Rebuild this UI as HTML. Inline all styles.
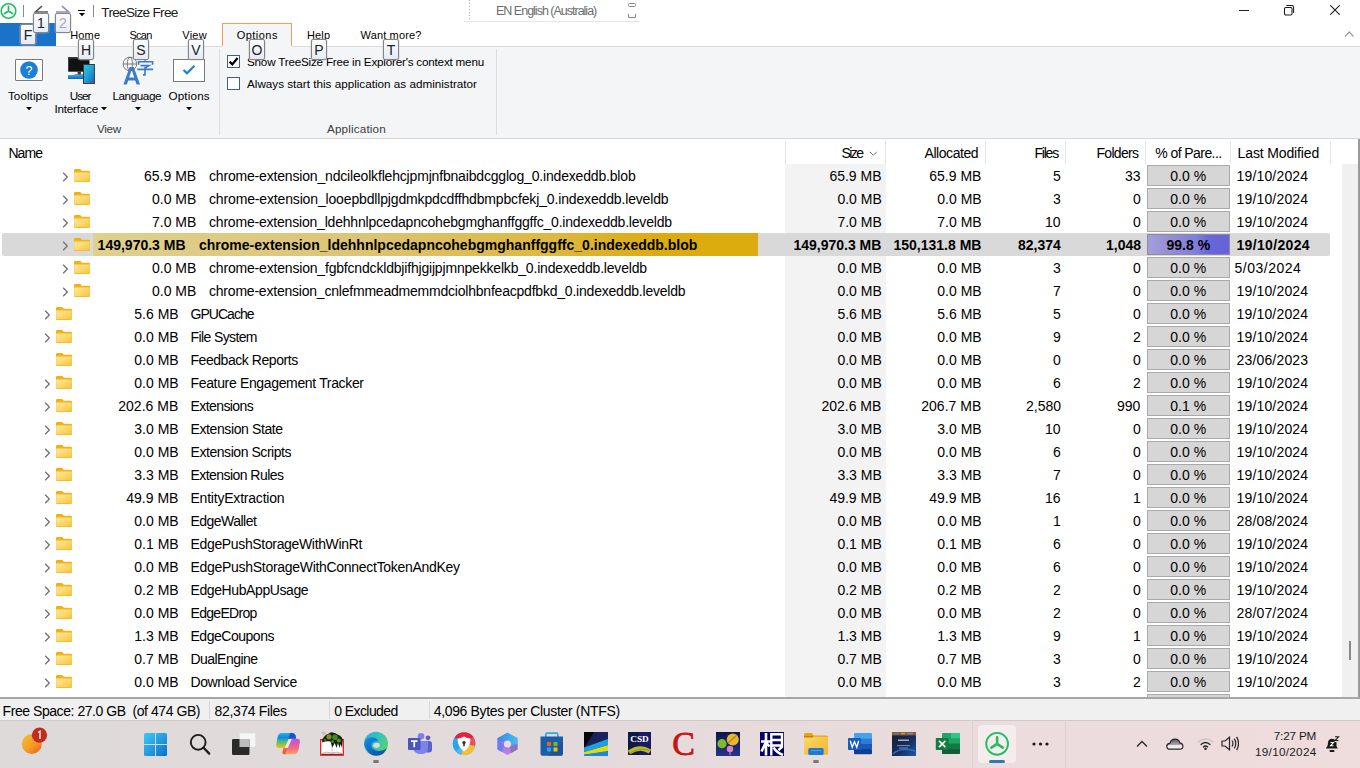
<!DOCTYPE html>
<html><head><meta charset="utf-8"><title>TreeSize Free</title>
<style>
html,body{margin:0;padding:0;}
body{width:1360px;height:768px;overflow:hidden;position:relative;background:#fff;font-family:"Liberation Sans", sans-serif;}
.t{position:absolute;white-space:nowrap;}
.r{position:absolute;display:block;}
.kt{position:absolute;box-sizing:border-box;border:1px solid #858585;border-radius:2px;background:linear-gradient(180deg,#fbfcfe 0%,#eef2f9 60%,#e4eaf5 100%);font-size:14px;text-align:center;font-family:"Liberation Sans", sans-serif;box-shadow:0 0 0 0.3px #bbb;}
</style></head><body>
<svg width="0" height="0" style="position:absolute"><defs><linearGradient id="fg" x1="0" y1="0" x2="1" y2="1"><stop offset="0" stop-color="#ffe7a0"/><stop offset="0.5" stop-color="#fcd86e"/><stop offset="1" stop-color="#f7c440"/></linearGradient></defs></svg>
<div class="r" style="left:0px;top:0px;width:1360px;height:46px;background:#fff"></div>
<svg class="r" style="left:0px;top:2px;" width="18" height="18" viewBox="0 0 18 18"><circle cx="8.5" cy="9" r="7.3" fill="none" stroke="#1fbf5f" stroke-width="1.6"/><path d="M8.5 9 V4.5 M8.5 9 L4.6 11.6 M8.5 9 L12.4 11.6" stroke="#1fbf5f" stroke-width="1.8" stroke-linecap="round"/></svg>
<div class="r" style="left:23px;top:5px;width:1px;height:12px;background:#8a8a8a"></div>
<svg class="r" style="left:33px;top:5px;" width="18" height="10" viewBox="0 0 18 10"><path d="M9 1 L2.5 7 H15" fill="none" stroke="#555" stroke-width="1.7"/></svg>
<svg class="r" style="left:55px;top:5px;" width="18" height="10" viewBox="0 0 18 10"><path d="M7 1 L13.5 7 H1" fill="none" stroke="#8a8ab8" stroke-width="1.7"/></svg>
<div class="r" style="left:78px;top:10px;width:7px;height:1px;background:#000"></div>
<svg class="r" style="left:78.8px;top:13px;" width="8" height="5" viewBox="0 0 8 5"><path d="M0 0 H6 L3 3.3 Z" fill="#000"/></svg>
<div class="r" style="left:93px;top:5px;width:1px;height:12px;background:#8a8a8a"></div>
<div class="t" style="left:101.30px;top:3px;font-size:13.6px;line-height:20px;color:#1c1c1c;letter-spacing:-0.717px;">TreeSize Free</div>
<svg class="r" style="left:464px;top:0px;" width="180" height="23" viewBox="0 0 180 23"><line x1="5.5" y1="0" x2="5.5" y2="21" stroke="#aaa" stroke-dasharray="1,2"/><line x1="0" y1="21.5" x2="176" y2="21.5" stroke="#e6e6e6"/></svg>
<div class="t" style="left:496.00px;top:1px;font-size:12.5px;line-height:20px;color:#6d6d6d;letter-spacing:-1.000px;">EN English (Australia)</div>
<svg class="r" style="left:627px;top:2px;" width="10" height="18" viewBox="0 0 10 18"><rect x="1.5" y="1.5" width="7" height="3" rx="1" fill="none" stroke="#888"/><path d="M1.5 12 V15.5 H8.5 V12" fill="none" stroke="#888"/></svg>
<div class="r" style="left:1239px;top:10px;width:10px;height:1px;background:#222"></div>
<svg class="r" style="left:1283px;top:4px;" width="12" height="12" viewBox="0 0 12 12"><rect x="1.5" y="3.5" width="7.5" height="7.5" rx="1.3" fill="none" stroke="#1a1a1a" stroke-width="1.05"/><path d="M3.3 1.5 H8.8 Q10.6 1.5 10.6 3.3 V9" fill="none" stroke="#1a1a1a" stroke-width="1.05"/></svg>
<svg class="r" style="left:1330px;top:5px;" width="10" height="10" viewBox="0 0 10 10"><path d="M0.3 0.3 L9.7 9.7 M9.7 0.3 L0.3 9.7" stroke="#1a1a1a" stroke-width="1.05"/></svg>
<div class="r" style="left:0px;top:23px;width:56px;height:23px;background:#1a73c8"></div>
<div class="t" style="left:70.30px;top:25px;font-size:11px;line-height:20px;color:#000;letter-spacing:0.133px;">Home</div>
<div class="t" style="left:129.50px;top:25px;font-size:11px;line-height:20px;color:#000;letter-spacing:-0.733px;">Scan</div>
<div class="t" style="left:182.30px;top:25px;font-size:11px;line-height:20px;color:#000;letter-spacing:0.233px;">View</div>
<div class="r" style="left:222px;top:23px;width:70px;height:24px;background:#f4f5f7;border:1px solid #f59a62;border-bottom:none;box-sizing:border-box"></div>
<div class="t" style="left:236.70px;top:25px;font-size:11px;line-height:20px;color:#000;letter-spacing:0.467px;">Options</div>
<div class="t" style="left:307.00px;top:25px;font-size:11px;line-height:20px;color:#000;letter-spacing:0.133px;">Help</div>
<div class="t" style="left:360.50px;top:25px;font-size:11px;line-height:20px;color:#000;letter-spacing:0.156px;">Want more?</div>
<svg class="r" style="left:1344px;top:30px;" width="11" height="8" viewBox="0 0 11 8"><path d="M1 6.5 L5.2 2 L9.4 6.5" fill="none" stroke="#9a9a9a" stroke-width="1.2"/></svg>
<div class="r" style="left:0px;top:46px;width:222px;height:1px;background:#dcdcdc"></div>
<div class="r" style="left:292px;top:46px;width:1068px;height:1px;background:#dcdcdc"></div>
<div class="r" style="left:0px;top:47px;width:1360px;height:91px;background:#f4f5f7"></div>
<div class="r" style="left:222px;top:46px;width:70px;height:1px;background:#f4f5f7"></div>
<div class="r" style="left:0px;top:138px;width:1360px;height:1px;background:#d6d6d6"></div>
<div class="r" style="left:15px;top:59px;width:28px;height:22px;background:#fff;border:1px solid #7a7a7a;box-sizing:border-box;border-radius:1px"></div>
<svg class="r" style="left:19px;top:61px;" width="20" height="18" viewBox="0 0 20 18"><circle cx="10" cy="9" r="8.8" fill="#1a7fd6"/><text x="10" y="13.6" font-family="Liberation Sans" font-size="12.5" fill="#fff" text-anchor="middle">?</text></svg>
<div class="t" style="left:7.90px;top:86px;font-size:11.7px;line-height:20px;color:#000;letter-spacing:0.071px;">Tooltips</div>
<svg class="r" style="left:25.8px;top:107px;" width="8" height="5" viewBox="0 0 8 5"><path d="M0 0 H6 L3 3.3 Z" fill="#000"/></svg>
<svg class="r" style="left:64px;top:52px;" width="34" height="34" viewBox="0 0 34 34"><defs><linearGradient id="kb" x1="0" y1="0" x2="0" y2="1"><stop offset="0" stop-color="#33aaf5"/><stop offset="1" stop-color="#0a62c8"/></linearGradient><linearGradient id="tb" x1="0" y1="0" x2="1" y2="1"><stop offset="0" stop-color="#2ec6d6"/><stop offset="0.45" stop-color="#22a6d8"/><stop offset="1" stop-color="#1562cc"/></linearGradient></defs><rect x="4.2" y="5.2" width="21.3" height="14.5" fill="#121212"/><rect x="4.2" y="5.2" width="21.3" height="1.5" fill="#3a3a3a"/><rect x="13.6" y="19.7" width="3.3" height="2.8" fill="#3a3a3a"/><rect x="10.3" y="22.5" width="8.9" height="1" fill="#3a3a3a"/><rect x="4" y="23" width="15.2" height="4" rx="0.6" fill="url(#kb)"/><rect x="19" y="12" width="11.9" height="19.9" fill="#2e2e2e"/><rect x="19.9" y="12.9" width="10.1" height="18.1" fill="url(#tb)"/></svg>
<div class="t" style="left:69.70px;top:86px;font-size:11.7px;line-height:20px;color:#000;letter-spacing:-0.967px;">User</div>
<div class="t" style="left:54.40px;top:99px;font-size:11.7px;line-height:20px;color:#000;letter-spacing:-0.213px;">Interface</div>
<svg class="r" style="left:101px;top:107px;" width="8" height="5" viewBox="0 0 8 5"><path d="M0 0 H6 L3 3.3 Z" fill="#000"/></svg>
<svg class="r" style="left:112px;top:55px;" width="44" height="32" viewBox="0 0 44 32"><circle cx="17.9" cy="9" r="6.8" fill="none" stroke="#7a7a7a" stroke-width="1"/><ellipse cx="17.9" cy="9" rx="2.6" ry="6.8" fill="none" stroke="#7a7a7a" stroke-width="1"/><line x1="11" y1="9" x2="24.8" y2="9" stroke="#7a7a7a" stroke-width="1"/><path d="M11.4 29.6 L17.7 12 H21.7 L28 29.6 H24.6 L23.2 25.4 H16.2 L14.8 29.6 Z M17.1 22.6 H22.3 L19.7 15 Z" fill="#3a7cc6" fill-rule="evenodd"/><path d="M33.1 5 V7.2 M26.6 9.7 V6.8 H40.6 V9.7 M28.6 10.6 H37 L33.1 13.2 M25.3 14.4 H41.1 M33 12 V19.9 H31" fill="none" stroke="#3a7cc6" stroke-width="1.6"/></svg>
<div class="t" style="left:112.40px;top:86px;font-size:11.7px;line-height:20px;color:#000;letter-spacing:-0.414px;">Language</div>
<svg class="r" style="left:135px;top:107px;" width="8" height="5" viewBox="0 0 8 5"><path d="M0 0 H6 L3 3.3 Z" fill="#000"/></svg>
<div class="r" style="left:173px;top:59px;width:32px;height:23px;background:#fff;border:1px solid #7a7a7a;box-sizing:border-box"></div>
<svg class="r" style="left:182px;top:64px;" width="14" height="11" viewBox="0 0 14 11"><path d="M1.5 6 L5 9.2 L12.5 1.8" fill="none" stroke="#1a7fd6" stroke-width="2.2"/></svg>
<div class="t" style="left:168.40px;top:86px;font-size:11.7px;line-height:20px;color:#000;letter-spacing:0.167px;">Options</div>
<svg class="r" style="left:185.5px;top:107px;" width="8" height="5" viewBox="0 0 8 5"><path d="M0 0 H6 L3 3.3 Z" fill="#000"/></svg>
<div class="t" style="left:97.00px;top:119px;font-size:11.7px;line-height:20px;color:#3b3b3b;letter-spacing:-0.333px;">View</div>
<div class="r" style="left:219px;top:49px;width:1px;height:86px;background:#dcdddd"></div>
<div class="r" style="left:227px;top:55px;width:13px;height:13px;background:#fff;border:1px solid #4a5a8a;box-sizing:border-box"></div>
<svg class="r" style="left:228px;top:56px;" width="11" height="11" viewBox="0 0 11 11"><path d="M1.6 5.6 L4.3 8.4 L9.6 2" fill="none" stroke="#000" stroke-width="2.3"/></svg>
<div class="t" style="left:247.00px;top:52px;font-size:11.7px;line-height:20px;color:#000;letter-spacing:-0.211px;">Show TreeSize Free in Explorer&#x27;s context menu</div>
<div class="r" style="left:227px;top:77px;width:13px;height:13px;background:#fff;border:1px solid #4a5a8a;box-sizing:border-box"></div>
<div class="t" style="left:247.00px;top:74px;font-size:11.7px;line-height:20px;color:#000;">Always start this application as administrator</div>
<div class="t" style="left:327.00px;top:119px;font-size:11.7px;line-height:20px;color:#3b3b3b;letter-spacing:0.150px;">Application</div>
<div class="r" style="left:496px;top:49px;width:1px;height:86px;background:#dcdddd"></div>
<div class="kt" style="left:20px;top:24px;width:16px;height:21px;line-height:20px;color:#222">F</div>
<div class="kt" style="left:33px;top:13px;width:16px;height:20px;line-height:19px;color:#222">1</div>
<div class="kt" style="left:55px;top:13px;width:16px;height:20px;line-height:19px;color:#aaa">2</div>
<div class="kt" style="left:78px;top:39px;width:16px;height:21px;line-height:20px;color:#222">H</div>
<div class="kt" style="left:133px;top:39px;width:16px;height:21px;line-height:20px;color:#222">S</div>
<div class="kt" style="left:188px;top:39px;width:16px;height:21px;line-height:20px;color:#222">V</div>
<div class="kt" style="left:249px;top:39px;width:16px;height:21px;line-height:20px;color:#222">O</div>
<div class="kt" style="left:311px;top:39px;width:16px;height:21px;line-height:20px;color:#222">P</div>
<div class="kt" style="left:383px;top:39px;width:16px;height:21px;line-height:20px;color:#222">T</div>
<div class="r" style="left:0px;top:139px;width:1358px;height:558px;background:#fff"></div>
<div class="r" style="left:1358px;top:139px;width:2px;height:560px;background:#9a9a9a"></div>
<div class="t" style="left:8.40px;top:143px;font-size:14px;line-height:20px;color:#000;letter-spacing:-0.900px;">Name</div>
<div class="r" style="left:785px;top:141px;width:1px;height:23px;background:#e5e5e5"></div>
<div class="r" style="left:885px;top:141px;width:1px;height:23px;background:#e5e5e5"></div>
<div class="r" style="left:985px;top:141px;width:1px;height:23px;background:#e5e5e5"></div>
<div class="r" style="left:1065px;top:141px;width:1px;height:23px;background:#e5e5e5"></div>
<div class="r" style="left:1145px;top:141px;width:1px;height:23px;background:#e5e5e5"></div>
<div class="r" style="left:1230px;top:141px;width:1px;height:23px;background:#e5e5e5"></div>
<div class="r" style="left:1330px;top:141px;width:1px;height:23px;background:#e5e5e5"></div>
<div class="t" style="left:841.40px;top:143px;font-size:14px;line-height:20px;color:#000;letter-spacing:-1.533px;">Size</div>
<svg class="r" style="left:869px;top:151px;" width="9" height="6" viewBox="0 0 9 6"><path d="M0.8 0.8 L4.3 4.3 L7.8 0.8" fill="none" stroke="#777" stroke-width="1"/></svg>
<div class="t" style="left:924.50px;top:143px;font-size:14px;line-height:20px;color:#000;letter-spacing:-0.438px;">Allocated</div>
<div class="t" style="left:1034.50px;top:143px;font-size:14px;line-height:20px;color:#000;letter-spacing:-1.225px;">Files</div>
<div class="t" style="left:1096.40px;top:143px;font-size:14px;line-height:20px;color:#000;letter-spacing:-0.667px;">Folders</div>
<div class="t" style="left:1155.30px;top:143px;font-size:14px;line-height:20px;color:#000;letter-spacing:-0.573px;">% of Pare...</div>
<div class="t" style="left:1237.60px;top:143px;font-size:14px;line-height:20px;color:#000;letter-spacing:-0.133px;">Last Modified</div>
<div class="r" style="left:1342px;top:164px;width:16px;height:533px;background:#f0f0f0"></div>
<div class="r" style="left:1349px;top:641px;width:2px;height:19px;background:#888"></div>
<div class="r" style="left:785px;top:164px;width:101px;height:533px;background:#f3f3f3"></div>
<svg class="r" style="left:62px;top:171.5px" width="7" height="10" viewBox="0 0 7 10"><path d="M1.2 0.8 L5.3 5 L1.2 9.2" fill="none" stroke="#707070" stroke-width="1.3"/></svg>
<svg class="r" style="left:74px;top:169px" width="16" height="13" viewBox="0 0 16 13"><path d="M0 1.2 Q0 0 1.2 0 H6.2 L7.8 1.8 H14.8 Q16 1.8 16 3 V4 H0 Z" fill="#f0b20a"/><rect x="0" y="2.6" width="16" height="10.4" rx="1.1" fill="#f4b622"/><rect x="0.2" y="3.4" width="15.6" height="8.8" rx="0.8" fill="url(#fg)"/></svg>
<div class="t" style="left:144.00px;top:166px;font-size:14px;line-height:20px;color:#000;">65.9 MB</div>
<div class="t" style="left:209.00px;top:166px;font-size:14px;line-height:20px;color:#000;letter-spacing:-0.177px;">chrome-extension_ndcileolkflehcjpmjnfbnaibdcgglog_0.indexeddb.blob</div>
<div class="t" style="left:829.40px;top:166px;font-size:14px;line-height:20px;color:#000;">65.9 MB</div>
<div class="t" style="left:929.30px;top:166px;font-size:14px;line-height:20px;color:#000;">65.9 MB</div>
<div class="t" style="left:1053.00px;top:166px;font-size:14px;line-height:20px;color:#000;">5</div>
<div class="t" style="left:1125.00px;top:166px;font-size:14px;line-height:20px;color:#000;">33</div>
<div class="r" style="left:1147px;top:165px;width:83px;height:21px;background:#d6d6d6;border:1px solid #a9a9a9;box-sizing:border-box"></div>
<div class="t" style="left:1170.30px;top:166px;font-size:14px;line-height:20px;color:#000;">0.0 %</div>
<div class="t" style="left:1236.50px;top:166px;font-size:14px;line-height:20px;color:#000;letter-spacing:0.167px;">19/10/2024</div>
<svg class="r" style="left:62px;top:194.5px" width="7" height="10" viewBox="0 0 7 10"><path d="M1.2 0.8 L5.3 5 L1.2 9.2" fill="none" stroke="#707070" stroke-width="1.3"/></svg>
<svg class="r" style="left:74px;top:192px" width="16" height="13" viewBox="0 0 16 13"><path d="M0 1.2 Q0 0 1.2 0 H6.2 L7.8 1.8 H14.8 Q16 1.8 16 3 V4 H0 Z" fill="#f0b20a"/><rect x="0" y="2.6" width="16" height="10.4" rx="1.1" fill="#f4b622"/><rect x="0.2" y="3.4" width="15.6" height="8.8" rx="0.8" fill="url(#fg)"/></svg>
<div class="t" style="left:152.00px;top:189px;font-size:14px;line-height:20px;color:#000;">0.0 MB</div>
<div class="t" style="left:209.00px;top:189px;font-size:14px;line-height:20px;color:#000;letter-spacing:-0.150px;">chrome-extension_looepbdllpjgdmkpdcdffhdbmpbcfekj_0.indexeddb.leveldb</div>
<div class="t" style="left:837.40px;top:189px;font-size:14px;line-height:20px;color:#000;">0.0 MB</div>
<div class="t" style="left:937.30px;top:189px;font-size:14px;line-height:20px;color:#000;">0.0 MB</div>
<div class="t" style="left:1053.00px;top:189px;font-size:14px;line-height:20px;color:#000;">3</div>
<div class="t" style="left:1133.00px;top:189px;font-size:14px;line-height:20px;color:#000;">0</div>
<div class="r" style="left:1147px;top:188px;width:83px;height:21px;background:#d6d6d6;border:1px solid #a9a9a9;box-sizing:border-box"></div>
<div class="t" style="left:1170.30px;top:189px;font-size:14px;line-height:20px;color:#000;">0.0 %</div>
<div class="t" style="left:1236.50px;top:189px;font-size:14px;line-height:20px;color:#000;letter-spacing:0.167px;">19/10/2024</div>
<svg class="r" style="left:62px;top:217.5px" width="7" height="10" viewBox="0 0 7 10"><path d="M1.2 0.8 L5.3 5 L1.2 9.2" fill="none" stroke="#707070" stroke-width="1.3"/></svg>
<svg class="r" style="left:74px;top:215px" width="16" height="13" viewBox="0 0 16 13"><path d="M0 1.2 Q0 0 1.2 0 H6.2 L7.8 1.8 H14.8 Q16 1.8 16 3 V4 H0 Z" fill="#f0b20a"/><rect x="0" y="2.6" width="16" height="10.4" rx="1.1" fill="#f4b622"/><rect x="0.2" y="3.4" width="15.6" height="8.8" rx="0.8" fill="url(#fg)"/></svg>
<div class="t" style="left:152.00px;top:212px;font-size:14px;line-height:20px;color:#000;">7.0 MB</div>
<div class="t" style="left:209.00px;top:212px;font-size:14px;line-height:20px;color:#000;letter-spacing:-0.200px;">chrome-extension_ldehhnlpcedapncohebgmghanffggffc_0.indexeddb.leveldb</div>
<div class="t" style="left:837.40px;top:212px;font-size:14px;line-height:20px;color:#000;">7.0 MB</div>
<div class="t" style="left:937.30px;top:212px;font-size:14px;line-height:20px;color:#000;">7.0 MB</div>
<div class="t" style="left:1045.00px;top:212px;font-size:14px;line-height:20px;color:#000;">10</div>
<div class="t" style="left:1133.00px;top:212px;font-size:14px;line-height:20px;color:#000;">0</div>
<div class="r" style="left:1147px;top:211px;width:83px;height:21px;background:#d6d6d6;border:1px solid #a9a9a9;box-sizing:border-box"></div>
<div class="t" style="left:1170.30px;top:212px;font-size:14px;line-height:20px;color:#000;">0.0 %</div>
<div class="t" style="left:1236.50px;top:212px;font-size:14px;line-height:20px;color:#000;letter-spacing:0.167px;">19/10/2024</div>
<div class="r" style="left:2px;top:233px;width:1328px;height:23px;background:#d9d9d9;border-radius:2px"></div>
<div class="r" style="left:93px;top:233px;width:665px;height:23px;background:linear-gradient(90deg,#dfd08f 0%,#dcc476 40%,#ddb73e 70%,#dbab10 85%,#dbab10 100%)"></div>
<svg class="r" style="left:62px;top:240.5px" width="7" height="10" viewBox="0 0 7 10"><path d="M1.2 0.8 L5.3 5 L1.2 9.2" fill="none" stroke="#707070" stroke-width="1.3"/></svg>
<svg class="r" style="left:74px;top:238px" width="16" height="13" viewBox="0 0 16 13"><path d="M0 1.2 Q0 0 1.2 0 H6.2 L7.8 1.8 H14.8 Q16 1.8 16 3 V4 H0 Z" fill="#f0b20a"/><rect x="0" y="2.6" width="16" height="10.4" rx="1.1" fill="#f4b622"/><rect x="0.2" y="3.4" width="15.6" height="8.8" rx="0.8" fill="url(#fg)"/></svg>
<div class="t" style="left:97.60px;top:235px;font-size:14px;line-height:20px;color:#000;font-weight:700;">149,970.3 MB</div>
<div class="t" style="left:199.00px;top:235px;font-size:14px;line-height:20px;color:#000;font-weight:700;letter-spacing:0.008px;">chrome-extension_ldehhnlpcedapncohebgmghanffggffc_0.indexeddb.blob</div>
<div class="t" style="left:793.40px;top:235px;font-size:14px;line-height:20px;color:#000;font-weight:700;">149,970.3 MB</div>
<div class="t" style="left:893.50px;top:235px;font-size:14px;line-height:20px;color:#000;font-weight:700;">150,131.8 MB</div>
<div class="t" style="left:1018.00px;top:235px;font-size:14px;line-height:20px;color:#000;font-weight:700;">82,374</div>
<div class="t" style="left:1106.00px;top:235px;font-size:14px;line-height:20px;color:#000;font-weight:700;">1,048</div>
<div class="r" style="left:1147px;top:234px;width:83px;height:21px;background:linear-gradient(90deg,#a39fdc,#8f89d6 35%,#7f7ddc 60%,#6866d9 75%,#6563d9);border:1px solid #8e8e8e;box-sizing:border-box"></div>
<div class="t" style="left:1166.50px;top:235px;font-size:14px;line-height:20px;color:#000;font-weight:700;">99.8 %</div>
<div class="t" style="left:1236.50px;top:235px;font-size:14px;line-height:20px;color:#000;font-weight:700;letter-spacing:0.333px;">19/10/2024</div>
<svg class="r" style="left:62px;top:263.5px" width="7" height="10" viewBox="0 0 7 10"><path d="M1.2 0.8 L5.3 5 L1.2 9.2" fill="none" stroke="#707070" stroke-width="1.3"/></svg>
<svg class="r" style="left:74px;top:261px" width="16" height="13" viewBox="0 0 16 13"><path d="M0 1.2 Q0 0 1.2 0 H6.2 L7.8 1.8 H14.8 Q16 1.8 16 3 V4 H0 Z" fill="#f0b20a"/><rect x="0" y="2.6" width="16" height="10.4" rx="1.1" fill="#f4b622"/><rect x="0.2" y="3.4" width="15.6" height="8.8" rx="0.8" fill="url(#fg)"/></svg>
<div class="t" style="left:152.00px;top:258px;font-size:14px;line-height:20px;color:#000;">0.0 MB</div>
<div class="t" style="left:209.00px;top:258px;font-size:14px;line-height:20px;color:#000;letter-spacing:-0.184px;">chrome-extension_fgbfcndckldbjifhjgijpjmnpekkelkb_0.indexeddb.leveldb</div>
<div class="t" style="left:837.40px;top:258px;font-size:14px;line-height:20px;color:#000;">0.0 MB</div>
<div class="t" style="left:937.30px;top:258px;font-size:14px;line-height:20px;color:#000;">0.0 MB</div>
<div class="t" style="left:1053.00px;top:258px;font-size:14px;line-height:20px;color:#000;">3</div>
<div class="t" style="left:1133.00px;top:258px;font-size:14px;line-height:20px;color:#000;">0</div>
<div class="r" style="left:1147px;top:257px;width:83px;height:21px;background:#d6d6d6;border:1px solid #a9a9a9;box-sizing:border-box"></div>
<div class="t" style="left:1170.30px;top:258px;font-size:14px;line-height:20px;color:#000;">0.0 %</div>
<div class="t" style="left:1234.50px;top:258px;font-size:14px;line-height:20px;color:#000;letter-spacing:0.500px;">5/03/2024</div>
<svg class="r" style="left:62px;top:286.5px" width="7" height="10" viewBox="0 0 7 10"><path d="M1.2 0.8 L5.3 5 L1.2 9.2" fill="none" stroke="#707070" stroke-width="1.3"/></svg>
<svg class="r" style="left:74px;top:284px" width="16" height="13" viewBox="0 0 16 13"><path d="M0 1.2 Q0 0 1.2 0 H6.2 L7.8 1.8 H14.8 Q16 1.8 16 3 V4 H0 Z" fill="#f0b20a"/><rect x="0" y="2.6" width="16" height="10.4" rx="1.1" fill="#f4b622"/><rect x="0.2" y="3.4" width="15.6" height="8.8" rx="0.8" fill="url(#fg)"/></svg>
<div class="t" style="left:152.00px;top:281px;font-size:14px;line-height:20px;color:#000;">0.0 MB</div>
<div class="t" style="left:209.00px;top:281px;font-size:14px;line-height:20px;color:#000;letter-spacing:-0.213px;">chrome-extension_cnlefmmeadmemmdciolhbnfeacpdfbkd_0.indexeddb.leveldb</div>
<div class="t" style="left:837.40px;top:281px;font-size:14px;line-height:20px;color:#000;">0.0 MB</div>
<div class="t" style="left:937.30px;top:281px;font-size:14px;line-height:20px;color:#000;">0.0 MB</div>
<div class="t" style="left:1053.00px;top:281px;font-size:14px;line-height:20px;color:#000;">7</div>
<div class="t" style="left:1133.00px;top:281px;font-size:14px;line-height:20px;color:#000;">0</div>
<div class="r" style="left:1147px;top:280px;width:83px;height:21px;background:#d6d6d6;border:1px solid #a9a9a9;box-sizing:border-box"></div>
<div class="t" style="left:1170.30px;top:281px;font-size:14px;line-height:20px;color:#000;">0.0 %</div>
<div class="t" style="left:1236.50px;top:281px;font-size:14px;line-height:20px;color:#000;letter-spacing:0.167px;">19/10/2024</div>
<svg class="r" style="left:44px;top:309.5px" width="7" height="10" viewBox="0 0 7 10"><path d="M1.2 0.8 L5.3 5 L1.2 9.2" fill="none" stroke="#707070" stroke-width="1.3"/></svg>
<svg class="r" style="left:56px;top:307px" width="16" height="13" viewBox="0 0 16 13"><path d="M0 1.2 Q0 0 1.2 0 H6.2 L7.8 1.8 H14.8 Q16 1.8 16 3 V4 H0 Z" fill="#f0b20a"/><rect x="0" y="2.6" width="16" height="10.4" rx="1.1" fill="#f4b622"/><rect x="0.2" y="3.4" width="15.6" height="8.8" rx="0.8" fill="url(#fg)"/></svg>
<div class="t" style="left:134.30px;top:304px;font-size:14px;line-height:20px;color:#000;">5.6 MB</div>
<div class="t" style="left:190.50px;top:304px;font-size:14px;line-height:20px;color:#000;letter-spacing:-0.971px;">GPUCache</div>
<div class="t" style="left:837.40px;top:304px;font-size:14px;line-height:20px;color:#000;">5.6 MB</div>
<div class="t" style="left:937.30px;top:304px;font-size:14px;line-height:20px;color:#000;">5.6 MB</div>
<div class="t" style="left:1053.00px;top:304px;font-size:14px;line-height:20px;color:#000;">5</div>
<div class="t" style="left:1133.00px;top:304px;font-size:14px;line-height:20px;color:#000;">0</div>
<div class="r" style="left:1147px;top:303px;width:83px;height:21px;background:#d6d6d6;border:1px solid #a9a9a9;box-sizing:border-box"></div>
<div class="t" style="left:1170.30px;top:304px;font-size:14px;line-height:20px;color:#000;">0.0 %</div>
<div class="t" style="left:1236.50px;top:304px;font-size:14px;line-height:20px;color:#000;letter-spacing:0.167px;">19/10/2024</div>
<svg class="r" style="left:44px;top:332.5px" width="7" height="10" viewBox="0 0 7 10"><path d="M1.2 0.8 L5.3 5 L1.2 9.2" fill="none" stroke="#707070" stroke-width="1.3"/></svg>
<svg class="r" style="left:56px;top:330px" width="16" height="13" viewBox="0 0 16 13"><path d="M0 1.2 Q0 0 1.2 0 H6.2 L7.8 1.8 H14.8 Q16 1.8 16 3 V4 H0 Z" fill="#f0b20a"/><rect x="0" y="2.6" width="16" height="10.4" rx="1.1" fill="#f4b622"/><rect x="0.2" y="3.4" width="15.6" height="8.8" rx="0.8" fill="url(#fg)"/></svg>
<div class="t" style="left:134.30px;top:327px;font-size:14px;line-height:20px;color:#000;">0.0 MB</div>
<div class="t" style="left:190.50px;top:327px;font-size:14px;line-height:20px;color:#000;letter-spacing:-0.610px;">File System</div>
<div class="t" style="left:837.40px;top:327px;font-size:14px;line-height:20px;color:#000;">0.0 MB</div>
<div class="t" style="left:937.30px;top:327px;font-size:14px;line-height:20px;color:#000;">0.0 MB</div>
<div class="t" style="left:1053.00px;top:327px;font-size:14px;line-height:20px;color:#000;">9</div>
<div class="t" style="left:1133.00px;top:327px;font-size:14px;line-height:20px;color:#000;">2</div>
<div class="r" style="left:1147px;top:326px;width:83px;height:21px;background:#d6d6d6;border:1px solid #a9a9a9;box-sizing:border-box"></div>
<div class="t" style="left:1170.30px;top:327px;font-size:14px;line-height:20px;color:#000;">0.0 %</div>
<div class="t" style="left:1236.50px;top:327px;font-size:14px;line-height:20px;color:#000;letter-spacing:0.167px;">19/10/2024</div>
<svg class="r" style="left:56px;top:353px" width="16" height="13" viewBox="0 0 16 13"><path d="M0 1.2 Q0 0 1.2 0 H6.2 L7.8 1.8 H14.8 Q16 1.8 16 3 V4 H0 Z" fill="#f0b20a"/><rect x="0" y="2.6" width="16" height="10.4" rx="1.1" fill="#f4b622"/><rect x="0.2" y="3.4" width="15.6" height="8.8" rx="0.8" fill="url(#fg)"/></svg>
<div class="t" style="left:134.30px;top:350px;font-size:14px;line-height:20px;color:#000;">0.0 MB</div>
<div class="t" style="left:190.50px;top:350px;font-size:14px;line-height:20px;color:#000;letter-spacing:-0.447px;">Feedback Reports</div>
<div class="t" style="left:837.40px;top:350px;font-size:14px;line-height:20px;color:#000;">0.0 MB</div>
<div class="t" style="left:937.30px;top:350px;font-size:14px;line-height:20px;color:#000;">0.0 MB</div>
<div class="t" style="left:1053.00px;top:350px;font-size:14px;line-height:20px;color:#000;">0</div>
<div class="t" style="left:1133.00px;top:350px;font-size:14px;line-height:20px;color:#000;">0</div>
<div class="r" style="left:1147px;top:349px;width:83px;height:21px;background:#d6d6d6;border:1px solid #a9a9a9;box-sizing:border-box"></div>
<div class="t" style="left:1170.30px;top:350px;font-size:14px;line-height:20px;color:#000;">0.0 %</div>
<div class="t" style="left:1236.50px;top:350px;font-size:14px;line-height:20px;color:#000;letter-spacing:0.167px;">23/06/2023</div>
<svg class="r" style="left:44px;top:378.5px" width="7" height="10" viewBox="0 0 7 10"><path d="M1.2 0.8 L5.3 5 L1.2 9.2" fill="none" stroke="#707070" stroke-width="1.3"/></svg>
<svg class="r" style="left:56px;top:376px" width="16" height="13" viewBox="0 0 16 13"><path d="M0 1.2 Q0 0 1.2 0 H6.2 L7.8 1.8 H14.8 Q16 1.8 16 3 V4 H0 Z" fill="#f0b20a"/><rect x="0" y="2.6" width="16" height="10.4" rx="1.1" fill="#f4b622"/><rect x="0.2" y="3.4" width="15.6" height="8.8" rx="0.8" fill="url(#fg)"/></svg>
<div class="t" style="left:134.30px;top:373px;font-size:14px;line-height:20px;color:#000;">0.0 MB</div>
<div class="t" style="left:190.50px;top:373px;font-size:14px;line-height:20px;color:#000;letter-spacing:-0.344px;">Feature Engagement Tracker</div>
<div class="t" style="left:837.40px;top:373px;font-size:14px;line-height:20px;color:#000;">0.0 MB</div>
<div class="t" style="left:937.30px;top:373px;font-size:14px;line-height:20px;color:#000;">0.0 MB</div>
<div class="t" style="left:1053.00px;top:373px;font-size:14px;line-height:20px;color:#000;">6</div>
<div class="t" style="left:1133.00px;top:373px;font-size:14px;line-height:20px;color:#000;">2</div>
<div class="r" style="left:1147px;top:372px;width:83px;height:21px;background:#d6d6d6;border:1px solid #a9a9a9;box-sizing:border-box"></div>
<div class="t" style="left:1170.30px;top:373px;font-size:14px;line-height:20px;color:#000;">0.0 %</div>
<div class="t" style="left:1236.50px;top:373px;font-size:14px;line-height:20px;color:#000;letter-spacing:0.167px;">19/10/2024</div>
<svg class="r" style="left:44px;top:401.5px" width="7" height="10" viewBox="0 0 7 10"><path d="M1.2 0.8 L5.3 5 L1.2 9.2" fill="none" stroke="#707070" stroke-width="1.3"/></svg>
<svg class="r" style="left:56px;top:399px" width="16" height="13" viewBox="0 0 16 13"><path d="M0 1.2 Q0 0 1.2 0 H6.2 L7.8 1.8 H14.8 Q16 1.8 16 3 V4 H0 Z" fill="#f0b20a"/><rect x="0" y="2.6" width="16" height="10.4" rx="1.1" fill="#f4b622"/><rect x="0.2" y="3.4" width="15.6" height="8.8" rx="0.8" fill="url(#fg)"/></svg>
<div class="t" style="left:118.30px;top:396px;font-size:14px;line-height:20px;color:#000;">202.6 MB</div>
<div class="t" style="left:190.50px;top:396px;font-size:14px;line-height:20px;color:#000;letter-spacing:-0.578px;">Extensions</div>
<div class="t" style="left:821.40px;top:396px;font-size:14px;line-height:20px;color:#000;">202.6 MB</div>
<div class="t" style="left:921.30px;top:396px;font-size:14px;line-height:20px;color:#000;">206.7 MB</div>
<div class="t" style="left:1026.00px;top:396px;font-size:14px;line-height:20px;color:#000;">2,580</div>
<div class="t" style="left:1117.00px;top:396px;font-size:14px;line-height:20px;color:#000;">990</div>
<div class="r" style="left:1147px;top:395px;width:83px;height:21px;background:#d6d6d6;border:1px solid #a9a9a9;box-sizing:border-box"></div>
<div class="t" style="left:1170.30px;top:396px;font-size:14px;line-height:20px;color:#000;">0.1 %</div>
<div class="t" style="left:1236.50px;top:396px;font-size:14px;line-height:20px;color:#000;letter-spacing:0.167px;">19/10/2024</div>
<svg class="r" style="left:44px;top:424.5px" width="7" height="10" viewBox="0 0 7 10"><path d="M1.2 0.8 L5.3 5 L1.2 9.2" fill="none" stroke="#707070" stroke-width="1.3"/></svg>
<svg class="r" style="left:56px;top:422px" width="16" height="13" viewBox="0 0 16 13"><path d="M0 1.2 Q0 0 1.2 0 H6.2 L7.8 1.8 H14.8 Q16 1.8 16 3 V4 H0 Z" fill="#f0b20a"/><rect x="0" y="2.6" width="16" height="10.4" rx="1.1" fill="#f4b622"/><rect x="0.2" y="3.4" width="15.6" height="8.8" rx="0.8" fill="url(#fg)"/></svg>
<div class="t" style="left:134.30px;top:419px;font-size:14px;line-height:20px;color:#000;">3.0 MB</div>
<div class="t" style="left:190.50px;top:419px;font-size:14px;line-height:20px;color:#000;letter-spacing:-0.393px;">Extension State</div>
<div class="t" style="left:837.40px;top:419px;font-size:14px;line-height:20px;color:#000;">3.0 MB</div>
<div class="t" style="left:937.30px;top:419px;font-size:14px;line-height:20px;color:#000;">3.0 MB</div>
<div class="t" style="left:1045.00px;top:419px;font-size:14px;line-height:20px;color:#000;">10</div>
<div class="t" style="left:1133.00px;top:419px;font-size:14px;line-height:20px;color:#000;">0</div>
<div class="r" style="left:1147px;top:418px;width:83px;height:21px;background:#d6d6d6;border:1px solid #a9a9a9;box-sizing:border-box"></div>
<div class="t" style="left:1170.30px;top:419px;font-size:14px;line-height:20px;color:#000;">0.0 %</div>
<div class="t" style="left:1236.50px;top:419px;font-size:14px;line-height:20px;color:#000;letter-spacing:0.167px;">19/10/2024</div>
<svg class="r" style="left:44px;top:447.5px" width="7" height="10" viewBox="0 0 7 10"><path d="M1.2 0.8 L5.3 5 L1.2 9.2" fill="none" stroke="#707070" stroke-width="1.3"/></svg>
<svg class="r" style="left:56px;top:445px" width="16" height="13" viewBox="0 0 16 13"><path d="M0 1.2 Q0 0 1.2 0 H6.2 L7.8 1.8 H14.8 Q16 1.8 16 3 V4 H0 Z" fill="#f0b20a"/><rect x="0" y="2.6" width="16" height="10.4" rx="1.1" fill="#f4b622"/><rect x="0.2" y="3.4" width="15.6" height="8.8" rx="0.8" fill="url(#fg)"/></svg>
<div class="t" style="left:134.30px;top:442px;font-size:14px;line-height:20px;color:#000;">0.0 MB</div>
<div class="t" style="left:190.50px;top:442px;font-size:14px;line-height:20px;color:#000;letter-spacing:-0.444px;">Extension Scripts</div>
<div class="t" style="left:837.40px;top:442px;font-size:14px;line-height:20px;color:#000;">0.0 MB</div>
<div class="t" style="left:937.30px;top:442px;font-size:14px;line-height:20px;color:#000;">0.0 MB</div>
<div class="t" style="left:1053.00px;top:442px;font-size:14px;line-height:20px;color:#000;">6</div>
<div class="t" style="left:1133.00px;top:442px;font-size:14px;line-height:20px;color:#000;">0</div>
<div class="r" style="left:1147px;top:441px;width:83px;height:21px;background:#d6d6d6;border:1px solid #a9a9a9;box-sizing:border-box"></div>
<div class="t" style="left:1170.30px;top:442px;font-size:14px;line-height:20px;color:#000;">0.0 %</div>
<div class="t" style="left:1236.50px;top:442px;font-size:14px;line-height:20px;color:#000;letter-spacing:0.167px;">19/10/2024</div>
<svg class="r" style="left:44px;top:470.5px" width="7" height="10" viewBox="0 0 7 10"><path d="M1.2 0.8 L5.3 5 L1.2 9.2" fill="none" stroke="#707070" stroke-width="1.3"/></svg>
<svg class="r" style="left:56px;top:468px" width="16" height="13" viewBox="0 0 16 13"><path d="M0 1.2 Q0 0 1.2 0 H6.2 L7.8 1.8 H14.8 Q16 1.8 16 3 V4 H0 Z" fill="#f0b20a"/><rect x="0" y="2.6" width="16" height="10.4" rx="1.1" fill="#f4b622"/><rect x="0.2" y="3.4" width="15.6" height="8.8" rx="0.8" fill="url(#fg)"/></svg>
<div class="t" style="left:134.30px;top:465px;font-size:14px;line-height:20px;color:#000;">3.3 MB</div>
<div class="t" style="left:190.50px;top:465px;font-size:14px;line-height:20px;color:#000;letter-spacing:-0.550px;">Extension Rules</div>
<div class="t" style="left:837.40px;top:465px;font-size:14px;line-height:20px;color:#000;">3.3 MB</div>
<div class="t" style="left:937.30px;top:465px;font-size:14px;line-height:20px;color:#000;">3.3 MB</div>
<div class="t" style="left:1053.00px;top:465px;font-size:14px;line-height:20px;color:#000;">7</div>
<div class="t" style="left:1133.00px;top:465px;font-size:14px;line-height:20px;color:#000;">0</div>
<div class="r" style="left:1147px;top:464px;width:83px;height:21px;background:#d6d6d6;border:1px solid #a9a9a9;box-sizing:border-box"></div>
<div class="t" style="left:1170.30px;top:465px;font-size:14px;line-height:20px;color:#000;">0.0 %</div>
<div class="t" style="left:1236.50px;top:465px;font-size:14px;line-height:20px;color:#000;letter-spacing:0.167px;">19/10/2024</div>
<svg class="r" style="left:44px;top:493.5px" width="7" height="10" viewBox="0 0 7 10"><path d="M1.2 0.8 L5.3 5 L1.2 9.2" fill="none" stroke="#707070" stroke-width="1.3"/></svg>
<svg class="r" style="left:56px;top:491px" width="16" height="13" viewBox="0 0 16 13"><path d="M0 1.2 Q0 0 1.2 0 H6.2 L7.8 1.8 H14.8 Q16 1.8 16 3 V4 H0 Z" fill="#f0b20a"/><rect x="0" y="2.6" width="16" height="10.4" rx="1.1" fill="#f4b622"/><rect x="0.2" y="3.4" width="15.6" height="8.8" rx="0.8" fill="url(#fg)"/></svg>
<div class="t" style="left:126.30px;top:488px;font-size:14px;line-height:20px;color:#000;">49.9 MB</div>
<div class="t" style="left:190.50px;top:488px;font-size:14px;line-height:20px;color:#000;letter-spacing:-0.213px;">EntityExtraction</div>
<div class="t" style="left:829.40px;top:488px;font-size:14px;line-height:20px;color:#000;">49.9 MB</div>
<div class="t" style="left:929.30px;top:488px;font-size:14px;line-height:20px;color:#000;">49.9 MB</div>
<div class="t" style="left:1045.00px;top:488px;font-size:14px;line-height:20px;color:#000;">16</div>
<div class="t" style="left:1133.00px;top:488px;font-size:14px;line-height:20px;color:#000;">1</div>
<div class="r" style="left:1147px;top:487px;width:83px;height:21px;background:#d6d6d6;border:1px solid #a9a9a9;box-sizing:border-box"></div>
<div class="t" style="left:1170.30px;top:488px;font-size:14px;line-height:20px;color:#000;">0.0 %</div>
<div class="t" style="left:1236.50px;top:488px;font-size:14px;line-height:20px;color:#000;letter-spacing:0.167px;">19/10/2024</div>
<svg class="r" style="left:44px;top:516.5px" width="7" height="10" viewBox="0 0 7 10"><path d="M1.2 0.8 L5.3 5 L1.2 9.2" fill="none" stroke="#707070" stroke-width="1.3"/></svg>
<svg class="r" style="left:56px;top:514px" width="16" height="13" viewBox="0 0 16 13"><path d="M0 1.2 Q0 0 1.2 0 H6.2 L7.8 1.8 H14.8 Q16 1.8 16 3 V4 H0 Z" fill="#f0b20a"/><rect x="0" y="2.6" width="16" height="10.4" rx="1.1" fill="#f4b622"/><rect x="0.2" y="3.4" width="15.6" height="8.8" rx="0.8" fill="url(#fg)"/></svg>
<div class="t" style="left:134.30px;top:511px;font-size:14px;line-height:20px;color:#000;">0.0 MB</div>
<div class="t" style="left:190.50px;top:511px;font-size:14px;line-height:20px;color:#000;letter-spacing:-0.533px;">EdgeWallet</div>
<div class="t" style="left:837.40px;top:511px;font-size:14px;line-height:20px;color:#000;">0.0 MB</div>
<div class="t" style="left:937.30px;top:511px;font-size:14px;line-height:20px;color:#000;">0.0 MB</div>
<div class="t" style="left:1053.00px;top:511px;font-size:14px;line-height:20px;color:#000;">1</div>
<div class="t" style="left:1133.00px;top:511px;font-size:14px;line-height:20px;color:#000;">0</div>
<div class="r" style="left:1147px;top:510px;width:83px;height:21px;background:#d6d6d6;border:1px solid #a9a9a9;box-sizing:border-box"></div>
<div class="t" style="left:1170.30px;top:511px;font-size:14px;line-height:20px;color:#000;">0.0 %</div>
<div class="t" style="left:1236.50px;top:511px;font-size:14px;line-height:20px;color:#000;letter-spacing:0.167px;">28/08/2024</div>
<svg class="r" style="left:44px;top:539.5px" width="7" height="10" viewBox="0 0 7 10"><path d="M1.2 0.8 L5.3 5 L1.2 9.2" fill="none" stroke="#707070" stroke-width="1.3"/></svg>
<svg class="r" style="left:56px;top:537px" width="16" height="13" viewBox="0 0 16 13"><path d="M0 1.2 Q0 0 1.2 0 H6.2 L7.8 1.8 H14.8 Q16 1.8 16 3 V4 H0 Z" fill="#f0b20a"/><rect x="0" y="2.6" width="16" height="10.4" rx="1.1" fill="#f4b622"/><rect x="0.2" y="3.4" width="15.6" height="8.8" rx="0.8" fill="url(#fg)"/></svg>
<div class="t" style="left:134.30px;top:534px;font-size:14px;line-height:20px;color:#000;">0.1 MB</div>
<div class="t" style="left:190.50px;top:534px;font-size:14px;line-height:20px;color:#000;letter-spacing:-0.343px;">EdgePushStorageWithWinRt</div>
<div class="t" style="left:837.40px;top:534px;font-size:14px;line-height:20px;color:#000;">0.1 MB</div>
<div class="t" style="left:937.30px;top:534px;font-size:14px;line-height:20px;color:#000;">0.1 MB</div>
<div class="t" style="left:1053.00px;top:534px;font-size:14px;line-height:20px;color:#000;">6</div>
<div class="t" style="left:1133.00px;top:534px;font-size:14px;line-height:20px;color:#000;">0</div>
<div class="r" style="left:1147px;top:533px;width:83px;height:21px;background:#d6d6d6;border:1px solid #a9a9a9;box-sizing:border-box"></div>
<div class="t" style="left:1170.30px;top:534px;font-size:14px;line-height:20px;color:#000;">0.0 %</div>
<div class="t" style="left:1236.50px;top:534px;font-size:14px;line-height:20px;color:#000;letter-spacing:0.167px;">19/10/2024</div>
<svg class="r" style="left:44px;top:562.5px" width="7" height="10" viewBox="0 0 7 10"><path d="M1.2 0.8 L5.3 5 L1.2 9.2" fill="none" stroke="#707070" stroke-width="1.3"/></svg>
<svg class="r" style="left:56px;top:560px" width="16" height="13" viewBox="0 0 16 13"><path d="M0 1.2 Q0 0 1.2 0 H6.2 L7.8 1.8 H14.8 Q16 1.8 16 3 V4 H0 Z" fill="#f0b20a"/><rect x="0" y="2.6" width="16" height="10.4" rx="1.1" fill="#f4b622"/><rect x="0.2" y="3.4" width="15.6" height="8.8" rx="0.8" fill="url(#fg)"/></svg>
<div class="t" style="left:134.30px;top:557px;font-size:14px;line-height:20px;color:#000;">0.0 MB</div>
<div class="t" style="left:190.50px;top:557px;font-size:14px;line-height:20px;color:#000;letter-spacing:-0.294px;">EdgePushStorageWithConnectTokenAndKey</div>
<div class="t" style="left:837.40px;top:557px;font-size:14px;line-height:20px;color:#000;">0.0 MB</div>
<div class="t" style="left:937.30px;top:557px;font-size:14px;line-height:20px;color:#000;">0.0 MB</div>
<div class="t" style="left:1053.00px;top:557px;font-size:14px;line-height:20px;color:#000;">6</div>
<div class="t" style="left:1133.00px;top:557px;font-size:14px;line-height:20px;color:#000;">0</div>
<div class="r" style="left:1147px;top:556px;width:83px;height:21px;background:#d6d6d6;border:1px solid #a9a9a9;box-sizing:border-box"></div>
<div class="t" style="left:1170.30px;top:557px;font-size:14px;line-height:20px;color:#000;">0.0 %</div>
<div class="t" style="left:1236.50px;top:557px;font-size:14px;line-height:20px;color:#000;letter-spacing:0.167px;">19/10/2024</div>
<svg class="r" style="left:44px;top:585.5px" width="7" height="10" viewBox="0 0 7 10"><path d="M1.2 0.8 L5.3 5 L1.2 9.2" fill="none" stroke="#707070" stroke-width="1.3"/></svg>
<svg class="r" style="left:56px;top:583px" width="16" height="13" viewBox="0 0 16 13"><path d="M0 1.2 Q0 0 1.2 0 H6.2 L7.8 1.8 H14.8 Q16 1.8 16 3 V4 H0 Z" fill="#f0b20a"/><rect x="0" y="2.6" width="16" height="10.4" rx="1.1" fill="#f4b622"/><rect x="0.2" y="3.4" width="15.6" height="8.8" rx="0.8" fill="url(#fg)"/></svg>
<div class="t" style="left:134.30px;top:580px;font-size:14px;line-height:20px;color:#000;">0.2 MB</div>
<div class="t" style="left:190.50px;top:580px;font-size:14px;line-height:20px;color:#000;letter-spacing:-0.400px;">EdgeHubAppUsage</div>
<div class="t" style="left:837.40px;top:580px;font-size:14px;line-height:20px;color:#000;">0.2 MB</div>
<div class="t" style="left:937.30px;top:580px;font-size:14px;line-height:20px;color:#000;">0.2 MB</div>
<div class="t" style="left:1053.00px;top:580px;font-size:14px;line-height:20px;color:#000;">2</div>
<div class="t" style="left:1133.00px;top:580px;font-size:14px;line-height:20px;color:#000;">0</div>
<div class="r" style="left:1147px;top:579px;width:83px;height:21px;background:#d6d6d6;border:1px solid #a9a9a9;box-sizing:border-box"></div>
<div class="t" style="left:1170.30px;top:580px;font-size:14px;line-height:20px;color:#000;">0.0 %</div>
<div class="t" style="left:1236.50px;top:580px;font-size:14px;line-height:20px;color:#000;letter-spacing:0.167px;">19/10/2024</div>
<svg class="r" style="left:44px;top:608.5px" width="7" height="10" viewBox="0 0 7 10"><path d="M1.2 0.8 L5.3 5 L1.2 9.2" fill="none" stroke="#707070" stroke-width="1.3"/></svg>
<svg class="r" style="left:56px;top:606px" width="16" height="13" viewBox="0 0 16 13"><path d="M0 1.2 Q0 0 1.2 0 H6.2 L7.8 1.8 H14.8 Q16 1.8 16 3 V4 H0 Z" fill="#f0b20a"/><rect x="0" y="2.6" width="16" height="10.4" rx="1.1" fill="#f4b622"/><rect x="0.2" y="3.4" width="15.6" height="8.8" rx="0.8" fill="url(#fg)"/></svg>
<div class="t" style="left:134.30px;top:603px;font-size:14px;line-height:20px;color:#000;">0.0 MB</div>
<div class="t" style="left:190.50px;top:603px;font-size:14px;line-height:20px;color:#000;letter-spacing:-0.700px;">EdgeEDrop</div>
<div class="t" style="left:837.40px;top:603px;font-size:14px;line-height:20px;color:#000;">0.0 MB</div>
<div class="t" style="left:937.30px;top:603px;font-size:14px;line-height:20px;color:#000;">0.0 MB</div>
<div class="t" style="left:1053.00px;top:603px;font-size:14px;line-height:20px;color:#000;">2</div>
<div class="t" style="left:1133.00px;top:603px;font-size:14px;line-height:20px;color:#000;">0</div>
<div class="r" style="left:1147px;top:602px;width:83px;height:21px;background:#d6d6d6;border:1px solid #a9a9a9;box-sizing:border-box"></div>
<div class="t" style="left:1170.30px;top:603px;font-size:14px;line-height:20px;color:#000;">0.0 %</div>
<div class="t" style="left:1236.50px;top:603px;font-size:14px;line-height:20px;color:#000;letter-spacing:0.167px;">28/07/2024</div>
<svg class="r" style="left:44px;top:631.5px" width="7" height="10" viewBox="0 0 7 10"><path d="M1.2 0.8 L5.3 5 L1.2 9.2" fill="none" stroke="#707070" stroke-width="1.3"/></svg>
<svg class="r" style="left:56px;top:629px" width="16" height="13" viewBox="0 0 16 13"><path d="M0 1.2 Q0 0 1.2 0 H6.2 L7.8 1.8 H14.8 Q16 1.8 16 3 V4 H0 Z" fill="#f0b20a"/><rect x="0" y="2.6" width="16" height="10.4" rx="1.1" fill="#f4b622"/><rect x="0.2" y="3.4" width="15.6" height="8.8" rx="0.8" fill="url(#fg)"/></svg>
<div class="t" style="left:134.30px;top:626px;font-size:14px;line-height:20px;color:#000;">1.3 MB</div>
<div class="t" style="left:190.50px;top:626px;font-size:14px;line-height:20px;color:#000;letter-spacing:-0.480px;">EdgeCoupons</div>
<div class="t" style="left:837.40px;top:626px;font-size:14px;line-height:20px;color:#000;">1.3 MB</div>
<div class="t" style="left:937.30px;top:626px;font-size:14px;line-height:20px;color:#000;">1.3 MB</div>
<div class="t" style="left:1053.00px;top:626px;font-size:14px;line-height:20px;color:#000;">9</div>
<div class="t" style="left:1133.00px;top:626px;font-size:14px;line-height:20px;color:#000;">1</div>
<div class="r" style="left:1147px;top:625px;width:83px;height:21px;background:#d6d6d6;border:1px solid #a9a9a9;box-sizing:border-box"></div>
<div class="t" style="left:1170.30px;top:626px;font-size:14px;line-height:20px;color:#000;">0.0 %</div>
<div class="t" style="left:1236.50px;top:626px;font-size:14px;line-height:20px;color:#000;letter-spacing:0.167px;">19/10/2024</div>
<svg class="r" style="left:44px;top:654.5px" width="7" height="10" viewBox="0 0 7 10"><path d="M1.2 0.8 L5.3 5 L1.2 9.2" fill="none" stroke="#707070" stroke-width="1.3"/></svg>
<svg class="r" style="left:56px;top:652px" width="16" height="13" viewBox="0 0 16 13"><path d="M0 1.2 Q0 0 1.2 0 H6.2 L7.8 1.8 H14.8 Q16 1.8 16 3 V4 H0 Z" fill="#f0b20a"/><rect x="0" y="2.6" width="16" height="10.4" rx="1.1" fill="#f4b622"/><rect x="0.2" y="3.4" width="15.6" height="8.8" rx="0.8" fill="url(#fg)"/></svg>
<div class="t" style="left:134.30px;top:649px;font-size:14px;line-height:20px;color:#000;">0.7 MB</div>
<div class="t" style="left:190.50px;top:649px;font-size:14px;line-height:20px;color:#000;letter-spacing:-0.544px;">DualEngine</div>
<div class="t" style="left:837.40px;top:649px;font-size:14px;line-height:20px;color:#000;">0.7 MB</div>
<div class="t" style="left:937.30px;top:649px;font-size:14px;line-height:20px;color:#000;">0.7 MB</div>
<div class="t" style="left:1053.00px;top:649px;font-size:14px;line-height:20px;color:#000;">3</div>
<div class="t" style="left:1133.00px;top:649px;font-size:14px;line-height:20px;color:#000;">0</div>
<div class="r" style="left:1147px;top:648px;width:83px;height:21px;background:#d6d6d6;border:1px solid #a9a9a9;box-sizing:border-box"></div>
<div class="t" style="left:1170.30px;top:649px;font-size:14px;line-height:20px;color:#000;">0.0 %</div>
<div class="t" style="left:1236.50px;top:649px;font-size:14px;line-height:20px;color:#000;letter-spacing:0.167px;">19/10/2024</div>
<svg class="r" style="left:44px;top:677.5px" width="7" height="10" viewBox="0 0 7 10"><path d="M1.2 0.8 L5.3 5 L1.2 9.2" fill="none" stroke="#707070" stroke-width="1.3"/></svg>
<svg class="r" style="left:56px;top:675px" width="16" height="13" viewBox="0 0 16 13"><path d="M0 1.2 Q0 0 1.2 0 H6.2 L7.8 1.8 H14.8 Q16 1.8 16 3 V4 H0 Z" fill="#f0b20a"/><rect x="0" y="2.6" width="16" height="10.4" rx="1.1" fill="#f4b622"/><rect x="0.2" y="3.4" width="15.6" height="8.8" rx="0.8" fill="url(#fg)"/></svg>
<div class="t" style="left:134.30px;top:672px;font-size:14px;line-height:20px;color:#000;">0.0 MB</div>
<div class="t" style="left:190.50px;top:672px;font-size:14px;line-height:20px;color:#000;letter-spacing:-0.407px;">Download Service</div>
<div class="t" style="left:837.40px;top:672px;font-size:14px;line-height:20px;color:#000;">0.0 MB</div>
<div class="t" style="left:937.30px;top:672px;font-size:14px;line-height:20px;color:#000;">0.0 MB</div>
<div class="t" style="left:1053.00px;top:672px;font-size:14px;line-height:20px;color:#000;">3</div>
<div class="t" style="left:1133.00px;top:672px;font-size:14px;line-height:20px;color:#000;">2</div>
<div class="r" style="left:1147px;top:671px;width:83px;height:21px;background:#d6d6d6;border:1px solid #a9a9a9;box-sizing:border-box"></div>
<div class="t" style="left:1170.30px;top:672px;font-size:14px;line-height:20px;color:#000;">0.0 %</div>
<div class="t" style="left:1236.50px;top:672px;font-size:14px;line-height:20px;color:#000;letter-spacing:0.167px;">19/10/2024</div>
<div class="r" style="left:1147px;top:694px;width:83px;height:10px;background:#d6d6d6;border:1px solid #a9a9a9;box-sizing:border-box"></div>
<div class="r" style="left:785px;top:697px;width:101px;height:0px;"></div>
<div class="r" style="left:0px;top:697px;width:1360px;height:2px;background:#a6a6a6"></div>
<div class="r" style="left:0px;top:699px;width:1360px;height:21px;background:#f0f0f0"></div>
<div class="t" style="left:2.60px;top:701px;font-size:14px;line-height:20px;color:#000;letter-spacing:-0.445px;">Free Space: 27.0 GB &nbsp;(of 474 GB)</div>
<div class="r" style="left:209px;top:701px;width:1px;height:18px;background:#d6d6d6"></div>
<div class="t" style="left:214.60px;top:701px;font-size:14px;line-height:20px;color:#000;letter-spacing:-0.355px;">82,374 Files</div>
<div class="r" style="left:329px;top:701px;width:1px;height:18px;background:#d6d6d6"></div>
<div class="t" style="left:334.30px;top:701px;font-size:14px;line-height:20px;color:#000;letter-spacing:-0.589px;">0 Excluded</div>
<div class="r" style="left:429px;top:701px;width:1px;height:18px;background:#d6d6d6"></div>
<div class="t" style="left:433.70px;top:701px;font-size:14px;line-height:20px;color:#000;letter-spacing:-0.334px;">4,096 Bytes per Cluster (NTFS)</div>
<div class="r" style="left:0px;top:720px;width:1360px;height:48px;background:linear-gradient(90deg,#dedad9 0%,#e3dadb 40%,#ecdcdd 75%,#efdcdd 100%)"></div>
<div class="r" style="left:0px;top:720px;width:1360px;height:1px;background:#cfcaca"></div>
<svg class="r" style="left:20px;top:732px;" width="30" height="26" viewBox="0 0 30 26"><defs><linearGradient id="wg" x1="0" y1="0" x2="1" y2="1"><stop offset="0" stop-color="#f4c430"/><stop offset="0.55" stop-color="#f29a26"/><stop offset="1" stop-color="#ec5e1c"/></linearGradient></defs><circle cx="11.8" cy="12" r="10" fill="url(#wg)"/><path d="M3 9 L19 2 M2.5 13.5 L21 5.5 M4 17.5 L22 10" stroke="#f0b030" stroke-width="0.8" opacity="0.5"/></svg>
<svg class="r" style="left:31px;top:727px;" width="17" height="17" viewBox="0 0 17 17"><circle cx="8.5" cy="8.2" r="7.6" fill="#c42b1c"/><path d="M7.2 5.5 L9 4.2 V12" fill="none" stroke="#fff" stroke-width="1.3"/></svg>
<svg class="r" style="left:144px;top:733px;" width="23" height="23" viewBox="0 0 23 23"><defs><linearGradient id="wl" x1="0" y1="0" x2="1" y2="1"><stop offset="0" stop-color="#3ccbf4"/><stop offset="1" stop-color="#0b6fd0"/></linearGradient></defs><rect x="0" y="0" width="23" height="23" rx="1.5" fill="url(#wl)"/><rect x="11" y="0" width="1" height="23" fill="#d9d6d6"/><rect x="0" y="11" width="23" height="1" fill="#d9d6d6"/></svg>
<svg class="r" style="left:189px;top:733px;" width="22" height="23" viewBox="0 0 22 23"><circle cx="9.2" cy="9.3" r="7.4" fill="none" stroke="#1e1e1e" stroke-width="1.9"/><path d="M14.6 14.8 L20.2 20.6" stroke="#1e1e1e" stroke-width="2.3" stroke-linecap="round"/></svg>
<svg class="r" style="left:232px;top:733px;" width="25" height="23" viewBox="0 0 25 23"><rect x="7.5" y="0" width="16" height="14" rx="1.2" fill="#f6f6f6" stroke="#e0e0e0" stroke-width="0.6"/><rect x="0" y="6" width="17.5" height="16" rx="1.2" fill="#2a2a2a"/><rect x="7.5" y="6" width="10" height="8" fill="#bcbcbc"/></svg>
<svg class="r" style="left:275px;top:732px;" width="27" height="24" viewBox="0 0 27 24"><defs><linearGradient id="cpa" x1="0" y1="0" x2="0" y2="1"><stop offset="0" stop-color="#22b4f2"/><stop offset="0.3" stop-color="#1a86e0"/><stop offset="0.55" stop-color="#3cbf84"/><stop offset="1" stop-color="#f4c010"/></linearGradient><linearGradient id="cpb" x1="0" y1="0" x2="0" y2="1"><stop offset="0" stop-color="#a660d8"/><stop offset="0.35" stop-color="#e058b0"/><stop offset="0.65" stop-color="#f27078"/><stop offset="1" stop-color="#f8aa6a"/></linearGradient></defs><path d="M6 1 H17.5 Q19.8 1 20.5 3.5 L20.8 6.8 H14.5 L10.5 16 H3.5 Q0.8 16 1.2 13 L2 8 Q3 1 6 1 Z" fill="url(#cpa)"/><path d="M15 1 H17.5 Q19.8 1 20.5 3.5 L21 6.8 H13.5 Z" fill="#1454c4"/><path d="M14.5 6.8 H22 Q25.2 6.8 24.9 10 L24 15.5 Q23 22.3 19.5 22.3 H9.5 Q7 22.3 7.5 19.5 L8.8 16 H10.5 Z" fill="url(#cpb)"/><path d="M8.8 16 H11.8 L10.6 22.3 H9 Q7.2 22.3 7.5 20 Z" fill="#f06030"/><path d="M13.6 7 H16.8 L12.8 16 H9.6 Z" fill="#efe9ea"/></svg>
<svg class="r" style="left:319px;top:731px;" width="26" height="26" viewBox="0 0 26 26"><rect x="1.7" y="8.6" width="22.6" height="15.6" fill="#fff" stroke="#e81010" stroke-width="1.2"/><path d="M2.5 23.3 H23.5" stroke="#5a0a0a" stroke-width="1"/><path d="M3 22.5 Q7 20 12.5 22 Q18 20 23 22.5" fill="none" stroke="#999" stroke-width="0.7"/><path d="M13 11 V23" stroke="#aaa" stroke-width="0.6"/><path d="M3 9.5 Q5 4 9 3 L12 1.2 Q16.5 1.2 19 3.8 Q23 5 23.8 9 L23 17 L21.6 13 L20.5 17 L19 12 L17.5 17 L15.8 12 L13.3 16.5 L11.5 10.5 Q7 9.8 3.3 11.5 Z" fill="#16240e"/><circle cx="10" cy="5.8" r="2.6" fill="#8a8a1e"/><circle cx="16" cy="6.3" r="2.8" fill="#3e8a1e"/><circle cx="19.8" cy="9.5" r="2" fill="#4a9a26"/><circle cx="13.5" cy="10.5" r="1.5" fill="#3e8a1e"/><circle cx="6" cy="9" r="1.3" fill="#2a7a2a"/><path d="M2.5 1 L6 4.5 M4 0.5 L7 3.5" stroke="#888" stroke-width="0.6"/></svg>
<svg class="r" style="left:363px;top:731px;" width="26" height="26" viewBox="0 0 26 26"><defs><linearGradient id="eg" x1="0" y1="0" x2="1" y2="0.6"><stop offset="0" stop-color="#2fb0e0"/><stop offset="0.55" stop-color="#34c3b8"/><stop offset="1" stop-color="#5ad06a"/></linearGradient><linearGradient id="eg2" x1="0" y1="0" x2="0.8" y2="1"><stop offset="0" stop-color="#1390e0"/><stop offset="1" stop-color="#0f4fa8"/></linearGradient></defs><circle cx="13" cy="12.8" r="12" fill="url(#eg)"/><path d="M1.2 13.5 Q1.5 6.5 9 6.2 Q14.5 6.5 15 10.5 Q12 9.5 9.5 11.5 Q7 14 9.5 17.5 Q13 21 19 19.5 Q22.5 18.5 23.8 17 Q21.5 24.8 13 24.8 Q4.5 24.5 1.2 13.5 Z" fill="url(#eg2)"/><ellipse cx="13.5" cy="14.3" rx="3.3" ry="2.6" fill="#dedada"/></svg>
<div class="r" style="left:373px;top:760px;width:6px;height:3px;background:#787878;border-radius:2px"></div>
<svg class="r" style="left:407px;top:732px;" width="26" height="24" viewBox="0 0 26 24"><circle cx="14" cy="4.3" r="3.3" fill="#7b83eb"/><circle cx="21" cy="5.8" r="2.4" fill="#5b5fc7"/><rect x="17" y="9" width="8" height="11.5" rx="3" fill="#5b5fc7"/><path d="M6 9 H21 V16 Q21 22 14 22 Q7 22 6 16 Z" fill="#7b83eb"/><rect x="1" y="6" width="12.5" height="12" rx="1" fill="#4b53bc"/><path d="M4 9.2 H10.5 M7.25 9.2 V15.2" stroke="#fff" stroke-width="1.7"/></svg>
<svg class="r" style="left:452px;top:732px;" width="24" height="24" viewBox="0 0 24 24"><circle cx="12" cy="11.8" r="11.3" fill="#2aa4e8"/><path d="M12 11.8 L2.8 5.2 A11.3 11.3 0 0 1 21.5 5 Z" fill="#e81e3c"/><path d="M12 11.8 L21.5 5 A11.3 11.3 0 0 1 23 14 Z" fill="#e85060"/><path d="M12 11.8 L23 14 A11.3 11.3 0 0 1 9 22.7 Z" fill="#f4c030"/><path d="M12 11.8 L9 22.7 A11.3 11.3 0 0 1 4 19 Z" fill="#50b8f0"/><path d="M12 4.5 Q15.5 6.5 18.5 6.5 Q18.5 15 12 19.5 Q5.5 15 5.5 6.5 Q8.5 6.5 12 4.5 Z" fill="#fff"/><circle cx="12" cy="10.6" r="1.7" fill="#333"/><rect x="11.2" y="11" width="1.6" height="3.3" fill="#333"/></svg>
<svg class="r" style="left:496px;top:732px;" width="23" height="24" viewBox="0 0 23 24"><defs><linearGradient id="m3a" x1="0" y1="0" x2="1" y2="0"><stop offset="0" stop-color="#3b86e0"/><stop offset="1" stop-color="#40c0f4"/></linearGradient><linearGradient id="m3b" x1="0" y1="0" x2="0" y2="1"><stop offset="0" stop-color="#8a6ee8"/><stop offset="1" stop-color="#c080e8"/></linearGradient></defs><path d="M11.5 0.8 L21.5 6.3 V17.5 L11.5 23 L1.5 17.5 V6.3 Z" fill="url(#m3b)"/><path d="M11.5 0.8 L21.5 6.3 V12.5 L15 12 L11.5 8 L6 9.5 L1.5 8 V6.3 Z" fill="url(#m3a)"/><path d="M21.5 12 V17.5 L15 21 L14 14 Z" fill="#8478b8"/><path d="M1.5 8 V17.5 L6 20 L8 13 Z" fill="#6a7ee8"/><circle cx="11.5" cy="12" r="3.6" fill="#e2dde2"/></svg>
<svg class="r" style="left:540px;top:732px;" width="24" height="25" viewBox="0 0 24 25"><path d="M5.8 5 V2.6 Q5.8 1.2 7.2 1.2 H16.4 Q17.8 1.2 17.8 2.6 V5" fill="none" stroke="#29a8f0" stroke-width="1.7"/><path d="M0.5 4.5 H23 V21.5 Q23 23.8 20.8 23.8 H2.7 Q0.5 23.8 0.5 21.5 Z" fill="#1b5ea6"/><path d="M23 10 V21.5 Q23 23.8 20.8 23.8 H8 Z" fill="#1f4a8a" opacity="0.6"/><rect x="7" y="10" width="4" height="4" fill="#f25f1c"/><rect x="13.5" y="10" width="4" height="4" fill="#7fb321"/><rect x="7" y="15.5" width="4" height="4" fill="#22a6f0"/><rect x="13.5" y="15.5" width="4" height="4" fill="#ffb902"/></svg>
<svg class="r" style="left:584px;top:732px;" width="24" height="24" viewBox="0 0 24 24"><rect x="0" y="0" width="24" height="24" rx="0.8" fill="#05050a"/><path d="M10 0 H24 V8 L0 16 Z" fill="#1e2a6a" opacity="0.85"/><path d="M0 0 H10 L0 16 Z" fill="#05050a"/><path d="M0 15.5 L24 7 V13 L0 20 Z" fill="#1aa0ea"/><path d="M0 20 L24 13 V19.5 L0 23 Z" fill="#d8dc18"/><path d="M0 22.5 L24 19 V24 H0 Z" fill="#1a88e0"/></svg>
<svg class="r" style="left:628px;top:732px;" width="23" height="23" viewBox="0 0 23 23"><rect x="0" y="0" width="23" height="23" fill="#101848"/><rect x="11" y="0" width="12" height="23" fill="#1a1c6c" opacity="0.8"/><text x="11.5" y="9.8" font-family="Liberation Serif" font-weight="700" font-size="8.6" fill="#fff" text-anchor="middle" textLength="18.5" lengthAdjust="spacingAndGlyphs">CSD</text><path d="M1 20.5 Q11.5 13 22 19.5" fill="none" stroke="#a8c428" stroke-width="4.6"/><path d="M1.5 21.5 Q11.5 14.5 21.5 18.5" fill="none" stroke="#d86a20" stroke-width="0.9"/></svg>
<svg class="r" style="left:670px;top:729px;" width="28" height="28" viewBox="0 0 28 28"><text x="13.5" y="26" font-family="Liberation Serif" font-size="34" fill="#c81414" stroke="#c81414" stroke-width="0.8" text-anchor="middle">C</text></svg>
<svg class="r" style="left:716px;top:732px;" width="24" height="24" viewBox="0 0 24 24"><defs><linearGradient id="pb" x1="0" y1="0" x2="0" y2="1"><stop offset="0" stop-color="#10144a"/><stop offset="1" stop-color="#24368a"/></linearGradient></defs><rect x="0" y="0" width="24" height="24" fill="url(#pb)"/><circle cx="16.8" cy="7.4" r="6" fill="#e8b82a"/><path d="M12 11 L21 3" stroke="#b08a20" stroke-width="1.4"/><circle cx="6" cy="11.7" r="4.6" fill="#7fba2a"/><circle cx="14" cy="17" r="3.2" fill="#d884c0"/><path d="M14 20 V23" stroke="#d884c0" stroke-width="1"/></svg>
<svg class="r" style="left:760px;top:732px;" width="24" height="24" viewBox="0 0 24 24"><rect x="0" y="0" width="24" height="24" fill="#000066"/><path d="M1 9.5 H10 M6 1 V23.5 M6 10 L1.5 19.5 M6.5 11 L9.5 14.5" fill="none" stroke="#fff" stroke-width="2.6"/><path d="M11.3 23.5 V2.3 H22 V13.5 H11.3 M11.3 8 H22 M13.5 15.5 Q17 21 23 23 M22.5 14.5 L18.5 18" fill="none" stroke="#fff" stroke-width="2.4"/></svg>
<svg class="r" style="left:804px;top:733px;" width="24" height="22" viewBox="0 0 24 22"><defs><linearGradient id="fe" x1="0" y1="0" x2="1" y2="1"><stop offset="0" stop-color="#fbd86a"/><stop offset="1" stop-color="#f2b428"/></linearGradient></defs><path d="M0 1.6 Q0 0 1.6 0 H7.6 L9.8 2.6 H22.4 Q24 2.6 24 4.2 V6 H0 Z" fill="#e0a80a"/><rect x="0" y="3.8" width="24" height="18" rx="1.2" fill="url(#fe)"/><rect x="0" y="3.2" width="9" height="1.2" fill="#c07010"/><rect x="4.3" y="15" width="15.3" height="7" rx="1.5" fill="#1c7ad2"/><rect x="7" y="17" width="10" height="1" fill="#4aa0e8"/></svg>
<div class="r" style="left:813px;top:760px;width:6px;height:3px;background:#787878;border-radius:2px"></div>
<svg class="r" style="left:848px;top:733px;" width="25" height="22" viewBox="0 0 25 22"><rect x="6" y="0" width="18" height="5.5" rx="1" fill="#41a5ee"/><rect x="6" y="5.3" width="18" height="5.5" fill="#2b7cd3"/><rect x="6" y="10.6" width="18" height="5.5" fill="#185abd"/><rect x="6" y="16" width="18" height="5.2" rx="1" fill="#103f91"/><rect x="0" y="5" width="13" height="12" rx="0.8" fill="#185abd"/><path d="M2.3 7.8 L4.2 14.2 L6.5 8.8 L8.8 14.2 L10.7 7.8" fill="none" stroke="#fff" stroke-width="1.4"/></svg>
<svg class="r" style="left:892px;top:732px;" width="24" height="24" viewBox="0 0 24 24"><defs><linearGradient id="ox" x1="0" y1="0" x2="1" y2="1"><stop offset="0" stop-color="#161c34"/><stop offset="0.55" stop-color="#1a2c5a"/><stop offset="1" stop-color="#1a5aa8"/></linearGradient></defs><rect x="0" y="0" width="24" height="24" fill="url(#ox)"/><rect x="0" y="0" width="24" height="3.4" fill="#8a5a30"/><rect x="2" y="0.8" width="5" height="1.5" fill="#4a7ab8"/><rect x="9" y="0.8" width="4" height="1.5" fill="#c8a040"/><rect x="15" y="0.8" width="6" height="1.5" fill="#6a8ac8"/><rect x="6" y="7.5" width="11" height="1.5" fill="#a8acc0"/><rect x="5" y="13" width="13" height="1.1" fill="#6a88c0"/><rect x="7" y="15.5" width="9" height="1.1" fill="#6a88c0"/><path d="M1 22 Q8 15 23 19" fill="none" stroke="#2a7ad0" stroke-width="1.4" opacity="0.8"/></svg>
<svg class="r" style="left:935px;top:733px;" width="26" height="22" viewBox="0 0 26 22"><rect x="7" y="0" width="18" height="21" rx="1" fill="#21a366"/><rect x="16" y="0" width="9" height="5.3" fill="#33c481"/><rect x="7" y="10.5" width="18" height="5.3" fill="#107c41"/><rect x="7" y="15.8" width="18" height="5.2" rx="1" fill="#185c37"/><rect x="0.8" y="5" width="12.8" height="12" rx="0.8" fill="#107c41"/><path d="M4 7.8 L10.4 14.2 M10.4 7.8 L4 14.2" stroke="#fff" stroke-width="1.7"/></svg>
<div class="r" style="left:972px;top:720px;width:1px;height:48px;background:#dcd0d1"></div>
<div class="r" style="left:978px;top:725px;width:38px;height:38px;background:#f5eced;border-radius:4px"></div>
<svg class="r" style="left:985px;top:731px;" width="24" height="26" viewBox="0 0 24 26"><circle cx="12.1" cy="12.8" r="10.9" fill="none" stroke="#21bf62" stroke-width="1.9"/><path d="M12.1 12.8 V6.4 M12.1 12.8 L6.4 16.6 M12.1 12.8 L17.8 16.6" stroke="#21bf62" stroke-width="2.6" stroke-linecap="round"/></svg>
<div class="r" style="left:989px;top:760px;width:16px;height:3px;background:#2f79ad;border-radius:2px"></div>
<svg class="r" style="left:1032px;top:741px;" width="18" height="6" viewBox="0 0 18 6"><circle cx="2" cy="3" r="1.6" fill="#1a1a1a"/><circle cx="8.5" cy="3" r="1.6" fill="#1a1a1a"/><circle cx="15" cy="3" r="1.6" fill="#1a1a1a"/></svg>
<div class="r" style="left:1065px;top:720px;width:1px;height:48px;background:#dcd0d1"></div>
<svg class="r" style="left:1136px;top:740px;" width="12" height="8" viewBox="0 0 12 8"><path d="M1 6.5 L6 1.5 L11 6.5" fill="none" stroke="#262626" stroke-width="1.3"/></svg>
<svg class="r" style="left:1165.5px;top:737.5px;" width="18" height="13" viewBox="0 0 18 13"><defs><linearGradient id="cl" x1="0" y1="0" x2="0" y2="1"><stop offset="0" stop-color="#5a5a5a"/><stop offset="0.55" stop-color="#a8a8a8"/><stop offset="0.6" stop-color="#e8e8e8"/><stop offset="1" stop-color="#f6f6f6"/></linearGradient></defs><path d="M4 11.2 Q0.8 11.2 0.8 8.3 Q0.8 5.5 3.9 5.3 Q4.9 1.2 9.1 1.2 Q12.8 1.2 13.8 4.8 Q16.9 5.1 16.9 8.2 Q16.9 11.2 13.6 11.2 Z" fill="url(#cl)" stroke="#262626" stroke-width="1.2"/></svg>
<svg class="r" style="left:1197px;top:737px;" width="17" height="13" viewBox="0 0 17 13"><path d="M1 5.2 Q8.5 -1.5 16 5.2" fill="none" stroke="#c8c0c0" stroke-width="1.3"/><path d="M3.6 7.8 Q8.5 3.2 13.4 7.8" fill="none" stroke="#262626" stroke-width="1.3"/><path d="M6 10.2 Q8.5 7.9 11 10.2" fill="none" stroke="#262626" stroke-width="1.3"/><circle cx="8.5" cy="11.7" r="1.3" fill="#262626"/></svg>
<svg class="r" style="left:1221px;top:736px;" width="18" height="15" viewBox="0 0 18 15"><path d="M1 5 H4 L8.5 1.2 V13.8 L4 10 H1 Z" fill="none" stroke="#262626" stroke-width="1.2"/><path d="M11 4.5 Q13 7.5 11 10.5 M13.3 2.6 Q16.3 7.5 13.3 12.4 M15.6 0.9 Q19.5 7.5 15.6 14.1" fill="none" stroke="#262626" stroke-width="1.2"/></svg>
<div class="t" style="left:1273.80px;top:726px;font-size:11.7px;line-height:20px;color:#1a1a1a;letter-spacing:-0.183px;">7:27 PM</div>
<div class="t" style="left:1255.00px;top:742px;font-size:11.7px;line-height:20px;color:#1a1a1a;letter-spacing:0.300px;">19/10/2024</div>
<svg class="r" style="left:1324px;top:736px;" width="17" height="17" viewBox="0 0 17 17"><path d="M2 12 Q4 10.5 4 7 Q4 3 8 2.8 Q10.5 2.8 11.5 4.5 L10 6 H12.5 V10 Q13 11.5 14 12.5 H2 Z" fill="#1a1a1a"/><rect x="5.5" y="14" width="5" height="2" rx="1" fill="#1a1a1a"/><path d="M11 0.8 H14.5 L11 4.5 H14.5" fill="none" stroke="#1a1a1a" stroke-width="1.1"/><path d="M6.5 6.5 H9.5 L6.5 9.8 H9.5" fill="none" stroke="#fff" stroke-width="1.1"/></svg>
</body></html>
